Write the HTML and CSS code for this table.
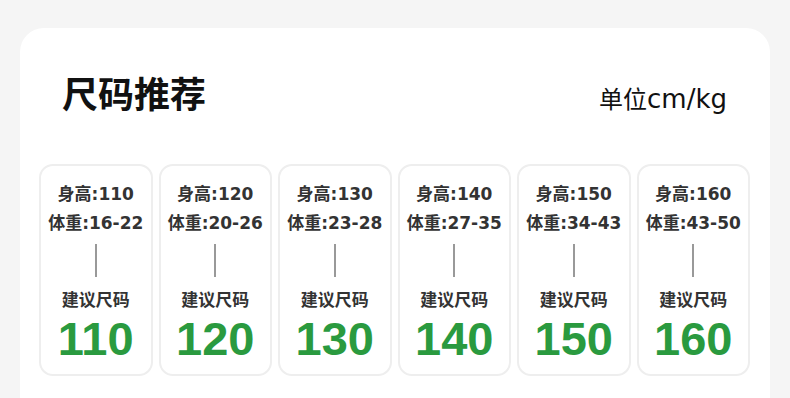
FILE: index.html
```html
<!DOCTYPE html>
<html lang="zh">
<head>
<meta charset="utf-8">
<link rel="stylesheet" href="styles.css">
</head>
<body>
<div class="panel">
  <div class="header">
    <h1 class="title">尺码推荐</h1>
    <div class="unit">单位<span class="unit-latin">cm/kg</span></div>
  </div>
  <div class="sizes">
    <div class="size-card">
      <div class="info">身高:110</div>
      <div class="info">体重:16-22</div>
      <div class="divider"></div>
      <div class="label">建议尺码</div>
      <div class="value">110</div>
    </div>
    <div class="size-card">
      <div class="info">身高:120</div>
      <div class="info">体重:20-26</div>
      <div class="divider"></div>
      <div class="label">建议尺码</div>
      <div class="value">120</div>
    </div>
    <div class="size-card">
      <div class="info">身高:130</div>
      <div class="info">体重:23-28</div>
      <div class="divider"></div>
      <div class="label">建议尺码</div>
      <div class="value">130</div>
    </div>
    <div class="size-card">
      <div class="info">身高:140</div>
      <div class="info">体重:27-35</div>
      <div class="divider"></div>
      <div class="label">建议尺码</div>
      <div class="value">140</div>
    </div>
    <div class="size-card">
      <div class="info">身高:150</div>
      <div class="info">体重:34-43</div>
      <div class="divider"></div>
      <div class="label">建议尺码</div>
      <div class="value">150</div>
    </div>
    <div class="size-card">
      <div class="info">身高:160</div>
      <div class="info">体重:43-50</div>
      <div class="divider"></div>
      <div class="label">建议尺码</div>
      <div class="value">160</div>
    </div>
  </div>
</div>
</body>
</html>
```

FILE: styles.css
```css
* { box-sizing: border-box; }
html, body { margin: 0; padding: 0; }
body {
  background: #f5f5f5;
  font-family: "Liberation Sans", "Noto Sans CJK SC", sans-serif;
  width: 790px;
  height: 398px;
  overflow: hidden;
}
.panel {
  margin: 28px 20px 0;
  background: #fff;
  border-radius: 24px;
  height: 420px;
  padding-top: 46px;
}
.header {
  display: flex;
  justify-content: space-between;
  align-items: center;
  padding: 0 43px 0 42px;
  height: 36px;
}
.title {
  margin: 0;
  font-family: "Noto Sans CJK SC", sans-serif;
  font-size: 36px;
  line-height: 36px;
  font-weight: 700;
  color: #111;
}
.unit {
  font-family: "Noto Sans CJK SC", sans-serif;
  font-size: 24px;
  line-height: 36px;
  color: #111;
  padding-top: 12px;
  white-space: nowrap;
}
.unit-latin {
  font-family: "DejaVu Sans", sans-serif;
  font-size: 26px;
}
.sizes {
  display: flex;
  gap: 6px;
  padding: 0 20px 0 19px;
  margin-top: 54px;
}
.size-card {
  width: 113.5px;
  border: 2px solid #eeeeee;
  border-radius: 14px;
  display: flex;
  flex-direction: column;
  align-items: center;
  padding: 14px 0 11px;
}
.info {
  font-family: "DejaVu Sans", "Noto Sans CJK SC", sans-serif;
  font-size: 17px;
  line-height: 29px;
  font-weight: 700;
  color: #333;
  white-space: nowrap;
}
.divider {
  width: 2px;
  height: 33px;
  background: #999;
  margin-top: 6px;
}
.label {
  margin-top: 10px;
  font-family: "Noto Sans CJK SC", sans-serif;
  font-size: 17px;
  line-height: 24px;
  font-weight: 700;
  color: #333;
}
.value {
  margin-top: 4px;
  font-size: 47px;
  line-height: 48px;
  font-weight: 700;
  color: #2a9a3f;
}
```
